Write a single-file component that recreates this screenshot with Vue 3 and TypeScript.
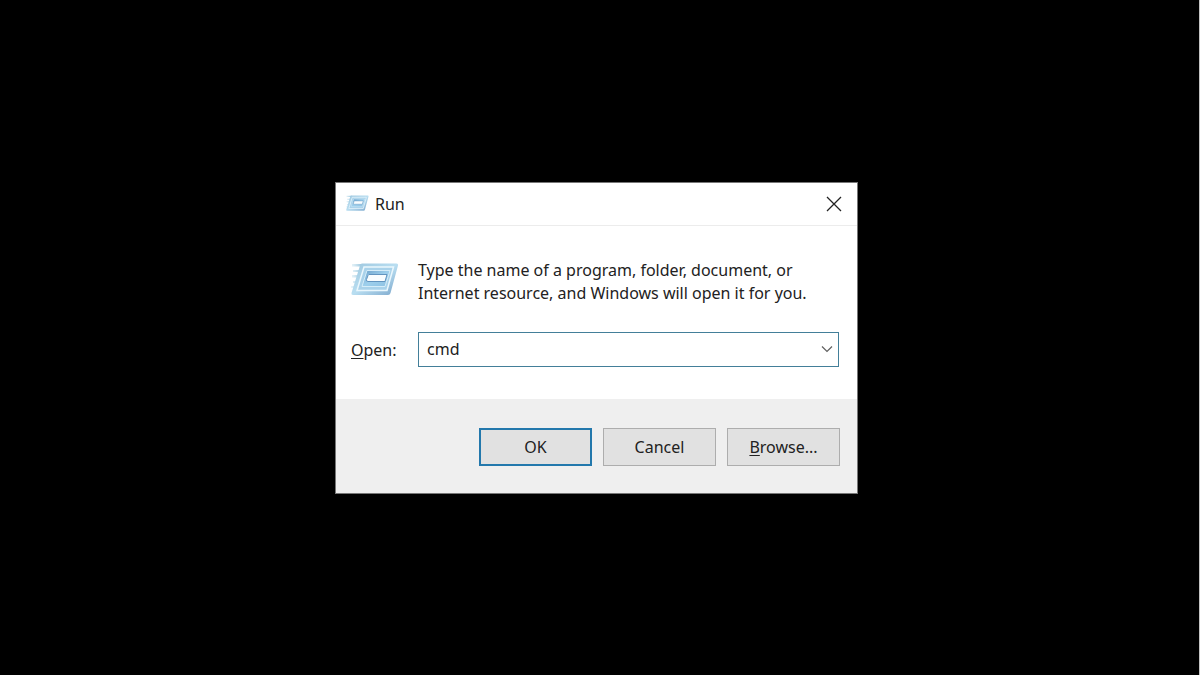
<script setup lang="ts">
import { ref } from 'vue'

const command = ref<string>('cmd')
</script>

<template>
  <main class="desktop">
    <form class="dialog" role="dialog" aria-labelledby="title" @submit.prevent>
      <header class="titlebar">
        <svg class="small-icon" viewBox="0 0 48 36" aria-hidden="true">
          <use href="#run-icon" />
        </svg>
        <h1 id="title">Run</h1>
        <button class="close" type="button" aria-label="Close">
          <svg viewBox="0 0 16 16" aria-hidden="true">
            <path d="M1 1 15 15M15 1 1 15" fill="none" stroke="#222" stroke-width="1.3" />
          </svg>
        </button>
      </header>

      <div class="body">
        <svg class="large-icon" viewBox="0 0 48 36" aria-hidden="true">
          <defs>
            <linearGradient id="frame" x1="0" y1="0" x2="1" y2="1">
              <stop offset="0" stop-color="#9cc6de" />
              <stop offset="0.5" stop-color="#b9def1" />
              <stop offset="1" stop-color="#7ba6cb" />
            </linearGradient>
            <linearGradient id="panel" x1="0" y1="0" x2="1" y2="1">
              <stop offset="0" stop-color="#6a9fc9" />
              <stop offset="0.5" stop-color="#9dcfec" />
              <stop offset="1" stop-color="#8cc0e2" />
            </linearGradient>
            <linearGradient id="trail" x1="0" y1="0" x2="1" y2="0">
              <stop offset="0" stop-color="#b9dcec" stop-opacity="0.3" />
              <stop offset="1" stop-color="#8fbfd9" />
            </linearGradient>
          </defs>
          <g id="run-icon">
            <path d="M1 1H12L11 3.500H1ZM2 7H10L9 9H2ZM1 12H9L8 14.500H1ZM2 18H7L6 20H2ZM0 23H6L5 25H0Z" fill="url(#trail)" />
            <path d="M11 0.500H45.500Q47.500 0.500 47 2.500L39.500 30Q39 32 37 32H2Q0 32 0.500 30L9 2.500Q9.500 0.500 11 0.500Z" fill="url(#frame)" />
            <path d="M13 4H42.500L36 27.500H6Z" fill="#a9d2ea" stroke="#eaf7fd" stroke-width="1.500" />
            <path d="M16 7.500H39L34 23.500H11Z" fill="url(#panel)" stroke="#d5edf9" stroke-width="1" />
            <path d="M18 11.500H36L34 18.500H17Q15 18.500 15.500 16.500L17 12.500Z" fill="#f9fdff" stroke="#6395c0" stroke-width="1" />
          </g>
        </svg>
        <p class="message">
          Type the name of a program, folder, document, or<br />
          Internet resource, and Windows will open it for you.
        </p>

        <label class="open-label" for="command"><u>O</u>pen:</label>
        <div class="combo">
          <input id="command" v-model="command" type="text" autocomplete="off" spellcheck="false" />
          <button type="button" aria-label="Show history">
            <svg viewBox="0 0 12 8" aria-hidden="true">
              <path d="M1 1.500 6 6.500 11 1.500" fill="none" stroke="#606060" stroke-width="1.200" />
            </svg>
          </button>
        </div>
      </div>

      <footer class="actions">
        <button class="action primary" type="submit">OK</button>
        <button class="action" type="button">Cancel</button>
        <button class="action" type="button"><span><u>B</u>rowse...</span></button>
      </footer>
    </form>
  </main>
</template>

<style>
body {
  background: #000;
}
</style>

<style scoped>
.desktop {
  box-sizing: border-box;
  min-height: 100vh;
  display: flex;
  align-items: center;
  justify-content: center;
  padding-right: 6px;
  border-right: 1px solid #c4c4c4;
  background: #000;
  color: #222;
  font: 16px/23px "Noto Sans", "Open Sans", sans-serif;
}

.dialog {
  box-sizing: border-box;
  width: 523px;
  max-width: 100%;
  border: 1px solid #777;
  background: #fff;
}

.titlebar {
  display: flex;
  align-items: center;
  height: 42px;
  padding: 0 8px 0 10px;
  border-bottom: 1px solid #ececec;
}

.small-icon {
  width: 23px;
  height: 18px;
}

h1 {
  flex: 1;
  margin: 0 0 0 6px;
  padding-top: 2px;
  font-size: 16px;
  font-weight: 400;
}

button {
  padding: 0;
  border: 0;
  background: transparent;
  color: inherit;
  font: inherit;
}

.close {
  display: grid;
  place-items: center;
  width: 30px;
  height: 30px;
}

.close svg {
  width: 16px;
  height: 16px;
}

.body {
  display: grid;
  grid-template-columns: 48px 1fr;
  column-gap: 19px;
  row-gap: 27px;
  align-items: center;
  padding: 33px 18px 32px 15px;
}

.large-icon {
  align-self: start;
  width: 48px;
  height: 36px;
  margin-top: 4px;
}

.message {
  margin: 0;
  white-space: nowrap;
}

.open-label {
  padding-top: 2px;
}

u {
  text-decoration-thickness: 1px;
  text-underline-offset: 2px;
}

.combo {
  display: flex;
  box-sizing: border-box;
  height: 35px;
  border: 1px solid #437f99;
}

.combo input {
  flex: 1;
  min-width: 0;
  padding: 0 8px;
  border: 0;
  outline: 0;
  background: transparent;
  color: inherit;
  font: inherit;
}

.combo button {
  display: grid;
  place-items: center;
  width: 22px;
}

.combo svg {
  width: 12px;
  height: 8px;
}

.actions {
  display: flex;
  justify-content: flex-end;
  gap: 11px;
  padding: 29px 17px 27px;
  background: #efefef;
}

.action {
  box-sizing: border-box;
  width: 113px;
  height: 38px;
  padding-top: 2px;
  border: 1px solid #adadad;
  background: #e1e1e1;
}

.primary {
  border: 2px solid #2378ac;
}
</style>
